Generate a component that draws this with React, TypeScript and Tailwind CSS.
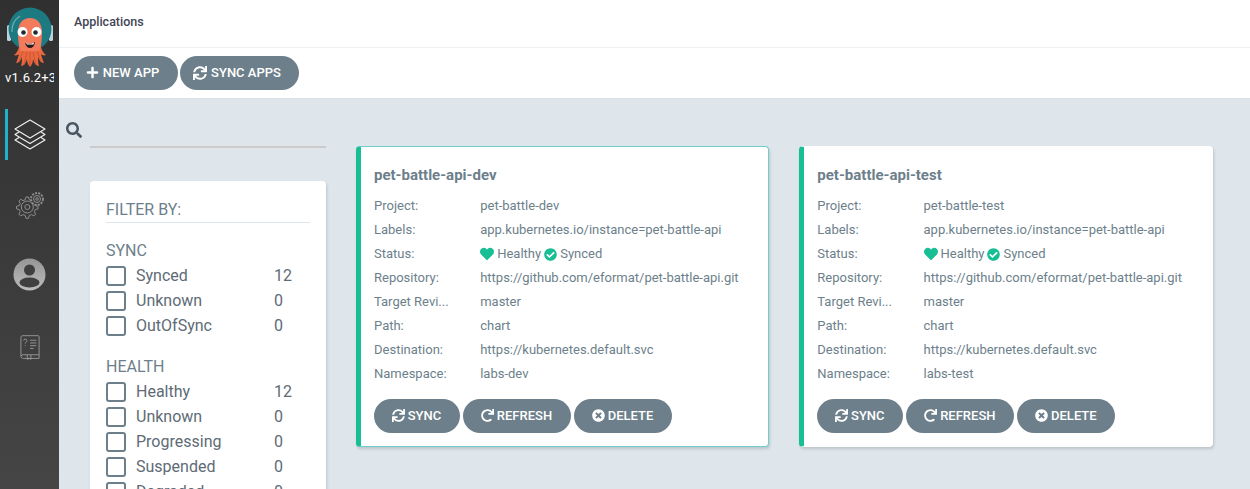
import { FaCheckCircle, FaHeart, FaPlus, FaRedo, FaSearch, FaSync, FaTimesCircle } from "react-icons/fa";
import type { ReactNode } from "react";

function Logo() {
  return (
    <svg width="46" height="61" viewBox="0 0 46 61">
      <rect x="0" y="18" width="4" height="16" rx="1.500" fill="#bcd3de" />
      <rect x="42" y="18" width="4" height="16" rx="1.500" fill="#bcd3de" />
      <circle cx="23" cy="22" r="21.500" fill="#1d7a80" />
      <path d="M5 25a18 18 0 0 1 8-16" fill="none" stroke="#6aaeb0" strokeWidth="1.200" />
      {/* tentacles */}
      <path d="M13 36c-1 6-3 10-6 12 2 1 4 0 5-1-1 4-2 7-3 9 3 0 5-3 6-6 0 3 0 6-1 9 3 0 5-3 6-7 0 3 1 6 3 8 2-2 3-5 3-8 1 4 3 7 6 7-1-3-1-6-1-9 1 3 3 6 6 6-1-2-2-5-3-9 1 1 3 2 5 1-3-2-5-6-6-12z" fill="#e8683f" />
      <path d="M16 44l-4 11M20 45l-3 13M23 45v13M26 45l3 13M30 44l4 11" stroke="#c94f2a" strokeWidth=".8" fill="none" />
      {/* head */}
      <path d="M11 26c0-10 5-15 12-15s12 5 12 15c0 8-1 14-3 18H14c-2-4-3-10-3-18z" fill="#f47a5c" />
      <circle cx="15.500" cy="25" r="5" fill="#fff" />
      <circle cx="29.500" cy="25" r="5" fill="#fff" />
      <circle cx="16.500" cy="25.500" r="2.300" fill="#1f2a30" />
      <circle cx="28.500" cy="25.500" r="2.300" fill="#1f2a30" />
      <path d="M18 36c3 1 7 1 10-1-.5 4-2.500 6-5 6s-4-2-5-5z" fill="#2b1a1a" />
      <path d="M19 36.300c2.500.7 5.500.5 8-.6l-.5 1.800h-6.500z" fill="#fff" />
    </svg>
  );
}

function StackIcon() {
  return (
    <svg width="32" height="31" viewBox="0 0 32 31" fill="none" stroke="#f2f2f2" strokeWidth="1.100" strokeLinejoin="round">
      <path d="M16 1 31 10 16 19 1 10Z" />
      <path d="M5 13 1 15.500 16 24.500 31 15.500 27 13" />
      <path d="M5 18.500 1 21 16 30 31 21 27 18.500" />
    </svg>
  );
}

function GearsIcon() {
  return (
    <svg width="30" height="30" viewBox="0 0 30 30" fill="none" stroke="#8f8f8f" strokeWidth="1">
      <path d="M11 6l2.500 0 .8 2.700 2.200.9 2.400-1.300 1.700 1.700-1.300 2.400.9 2.200 2.800.8v2.400l-2.800.8-.9 2.200 1.300 2.400-1.700 1.700-2.400-1.300-2.200.9-.8 2.800h-2.500l-.8-2.800-2.200-.9-2.400 1.300-1.700-1.700 1.300-2.400-.9-2.200-2.800-.8v-2.400l2.800-.8.9-2.200-1.300-2.400 1.700-1.700 2.400 1.300 2.200-.9z" />
      <circle cx="12.300" cy="16" r="6" />
      <circle cx="12.300" cy="16" r="2.500" />
      <circle cx="22" cy="8" r="6" fill="#3b3b3b" strokeDasharray="2 1.200" strokeWidth="1.800" />
      <circle cx="22" cy="8" r="3.500" />
      <circle cx="22" cy="8" r="1.300" />
    </svg>
  );
}

function UserIcon() {
  return (
    <svg width="33" height="33" viewBox="0 0 33 33">
      <defs>
        <linearGradient id="userFill" x1="0" y1="0" x2="0" y2="1">
          <stop offset="0" stopColor="#969696" />
          <stop offset="1" stopColor="#bcbcbc" />
        </linearGradient>
      </defs>
      <circle cx="16.500" cy="16.500" r="16" fill="url(#userFill)" />
      <circle cx="16.500" cy="12" r="5.500" fill="#3f3f3f" />
      <ellipse cx="16.500" cy="24.500" rx="10" ry="5" fill="#3f3f3f" />
    </svg>
  );
}

function BookIcon() {
  return (
    <svg width="20" height="27" viewBox="0 0 22 28" fill="none" stroke="#9a9a9a" strokeWidth="1">
      <path d="M3 1h17a1 1 0 0 1 1 1v24H4a2.500 2.500 0 0 1-3-2.500V3a2 2 0 0 1 2-2z" />
      <path d="M1 23.500a2.500 2.500 0 0 1 3-1.500h17" />
      <path d="M8 22v5l2-1 2 1v-5" />
      <path d="M11 6h7M11 9h7M11 12h7M11 15h4" />
      <path d="M4 6.500a1.800 1.800 0 1 1 2.500 1.700c-.6.3-.8.700-.8 1.300M5.700 11.500v1" />
    </svg>
  );
}

function PillButton({ icon, label, className }: { icon: ReactNode; label: string; className: string }) {
  return (
    <button className={"flex h-[34px] items-center justify-center rounded-[17px] bg-[#6d7f8b] pb-[1px] text-[13px] font-medium text-white " + className}>
      {icon}
      {label}
    </button>
  );
}

function FilterRow({ label, count }: { label: string; count: number }) {
  return (
    <div className="flex h-[25px] items-center text-[16px] text-[#5e6b75]">
      <span className="h-5 w-5 shrink-0 rounded-[3px] border-2 border-[#6d7f8b]" />
      <span className="ml-[10px] w-[138px]">{label}</span>
      <span>{count}</span>
    </div>
  );
}

function FilterPanel() {
  return (
    <div className="h-[400px] w-[236px] rounded-[4px] bg-white px-[16px] pt-[17px] shadow-[1px_2px_3px_rgba(0,0,0,0.15)]">
      <div className="border-b border-[#dee6eb] text-[16px] leading-[24px] text-[#6d7f8b]">FILTER BY:</div>
      <div className="mt-[16px] text-[16px] leading-[24px] text-[#6d7f8b]">SYNC</div>
      <div>
        <FilterRow label="Synced" count={12} />
        <FilterRow label="Unknown" count={0} />
        <FilterRow label="OutOfSync" count={0} />
      </div>
      <div className="mt-[17px] text-[16px] leading-[24px] text-[#6d7f8b]">HEALTH</div>
      <div>
        <FilterRow label="Healthy" count={12} />
        <FilterRow label="Unknown" count={0} />
        <FilterRow label="Progressing" count={0} />
        <FilterRow label="Suspended" count={0} />
        <FilterRow label="Degraded" count={0} />
      </div>
    </div>
  );
}

function InfoRow({ label, children }: { label: string; children: ReactNode }) {
  return (
    <div className="flex h-[24px] items-center text-[13px] text-[#6d7f8b]">
      <span className="w-[106.2px] shrink-0">{label}</span>
      <span className="flex items-center">{children}</span>
    </div>
  );
}

function AppCard({ name, project, namespace, hovered }: { name: string; project: string; namespace: string; hovered?: boolean }) {
  return (
    <div className={"h-[301px] w-[413.33px] rounded-[4px] border border-l-[5px] border-l-[#18be94] bg-white pl-[13px] pt-[16px] shadow-[1px_2px_3px_rgba(0,0,0,0.15)] " + (hovered ? "border-y-[#6fcdd0] border-r-[#6fcdd0]" : "border-y-transparent border-r-transparent")}>
      <div className="mb-[7px] text-[15px] leading-[24px] font-bold text-[#6d7f8b]">{name}</div>
      <InfoRow label="Project:">{project}</InfoRow>
      <InfoRow label="Labels:">app.kubernetes.io/instance=pet-battle-api</InfoRow>
      <InfoRow label="Status:">
        <FaHeart className="mr-[3px] text-[14px] text-[#18be94]" />
        Healthy
        <FaCheckCircle className="mx-[3px] text-[13px] text-[#18be94]" />
        Synced
      </InfoRow>
      <InfoRow label="Repository:">https://github.com/eformat/pet-battle-api.git</InfoRow>
      <InfoRow label="Target Revi...">master</InfoRow>
      <InfoRow label="Path:">chart</InfoRow>
      <InfoRow label="Destination:">https://kubernetes.default.svc</InfoRow>
      <InfoRow label="Namespace:">{namespace}</InfoRow>
      <div className="mt-[13px] flex gap-[3px]">
        <PillButton icon={<FaSync className="text-[13px]" />} label="SYNC" className="w-[86px] gap-[3px] pr-[1px]" />
        <PillButton icon={<FaRedo className="text-[13px]" />} label="REFRESH" className="w-[108px] gap-[3px] pr-[1px]" />
        <PillButton icon={<FaTimesCircle className="text-[13px]" />} label="DELETE" className="w-[98px] gap-[3px] pr-[1px]" />
      </div>
    </div>
  );
}

export default function App() {
  return (
    <div className="flex h-[489px] w-[1250px] overflow-hidden bg-[#dee6eb] font-['Roboto',sans-serif]">
      <aside className="flex w-[59px] shrink-0 flex-col items-center overflow-hidden bg-gradient-to-b from-[#303030] to-[#454545]">
        <div className="mt-[7px]"><Logo /></div>
        <div className="mt-[1px] w-[59px] pl-[5px] text-[13px] leading-[18px] whitespace-nowrap text-white">
          <div className="w-[49px] overflow-hidden tracking-[0.2px]">v1.6.2+3</div>
        </div>
        <div className="relative mt-[22px] flex h-[51px] w-[59px] items-center justify-center pl-[1px]">
          <span className="absolute top-0 left-[5px] h-[51px] w-[3px] bg-[#1eb3c9]" />
          <StackIcon />
        </div>
        <div className="mt-[31px]"><GearsIcon /></div>
        <div className="mt-[37px]"><UserIcon /></div>
        <div className="mt-[43px]"><BookIcon /></div>
      </aside>
      <div className="flex min-w-0 flex-1 flex-col">
        <header className="flex h-[48px] shrink-0 items-center border-b border-[#eff2f4] bg-white pb-[3px] pl-[15px] text-[12.5px] font-medium text-[#3f4554]">Applications</header>
        <div className="flex h-[51px] shrink-0 gap-[2px] border-b border-[#d9e1e6] bg-white pt-[8px] pl-[15px]">
          <PillButton icon={<FaPlus className="text-[13px]" />} label="NEW APP" className="w-[104px] gap-[4px] pr-[7px]" />
          <PillButton icon={<FaSync className="text-[14px]" />} label="SYNC APPS" className="w-[119px] gap-[4px] pr-[5px]" />
        </div>
        <main className="flex min-h-0 flex-1">
          <div className="ml-[31px] w-[236px] shrink-0">
            <div className="relative h-[82px]">
              <FaSearch className="absolute top-[23px] left-[-24px] text-[16px] text-[#495763]" />
              <div className="h-[49px] border-b-2 border-[#ccc]" />
            </div>
            <FilterPanel />
          </div>
          <div className="mt-[47px] ml-[30px] flex items-start gap-[30px]">
            <AppCard name="pet-battle-api-dev" project="pet-battle-dev" namespace="labs-dev" hovered />
            <AppCard name="pet-battle-api-test" project="pet-battle-test" namespace="labs-test" />
          </div>
        </main>
      </div>
    </div>
  );
}
